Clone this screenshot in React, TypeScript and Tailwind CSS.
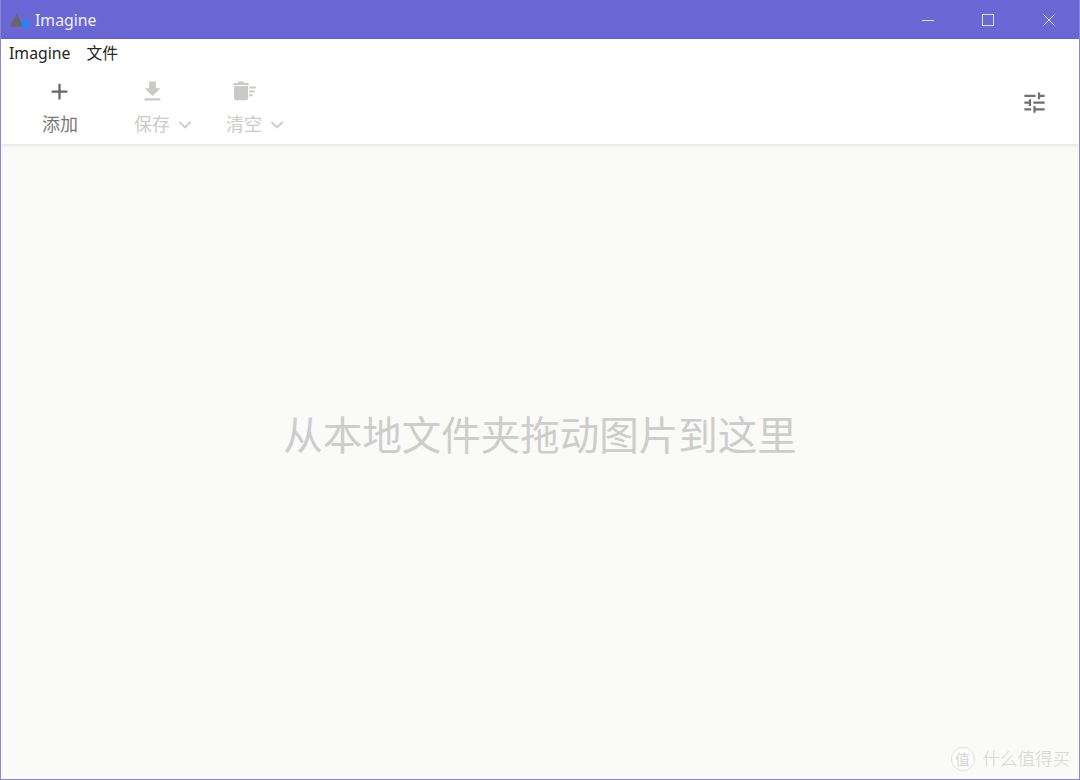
import React from "react";

const font = { fontFamily: '"Noto Sans", "Noto Sans CJK SC", sans-serif' };

function Chevron() {
  return (
    <svg width="14" height="14" viewBox="0 0 14 14" fill="none" stroke="currentColor" strokeWidth="1.9" className="ml-[8px] mt-[1px]">
      <path d="M1.5 4 7 9.5 12.5 4" />
    </svg>
  );
}

function ToolButton({ icon, label, chevron, disabled, className }: { icon: React.ReactNode; label: string; chevron?: boolean; disabled?: boolean; className: string }) {
  return (
    <div className={`flex flex-col items-center ${className} ${disabled ? "text-[#c9c9c7]" : "text-[#666666]"}`}>
      <div className="h-[24px] w-[24px]">{icon}</div>
      <div className={`mt-[8px] flex items-center text-[18px] leading-[26px] ${disabled ? "text-[#cbcbc9]" : "text-[#787878]"}`}>
        <span>{label}</span>
        {chevron && <Chevron />}
      </div>
    </div>
  );
}

export default function App() {
  return (
    <div className="relative flex h-[780px] w-[1080px] flex-col overflow-hidden border-x border-b border-x-[#8c86e2] border-b-[#8c86e2] bg-[#fafaf8]" style={font}>
      <div className="-mx-px flex h-[39px] shrink-0 items-center bg-[#6a67d5]">
        <svg width="24" height="16" viewBox="0 0 24 16" className="ml-[10px]">
          <path d="M6.5 1.5 13 14.5H0z" fill="#666666" />
          <path d="M20 14.5H11l4.5-8z" fill="#0a90ff" />
        </svg>
        <span className="ml-px pt-[2px] text-[15.8px] leading-none text-[#eeeefb]">Imagine</span>
        <div className="ml-auto flex h-full items-center text-[#dcdcf6]">
          <div className="flex w-[60px] justify-center">
            <svg width="12" height="12" viewBox="0 0 12 12" stroke="currentColor" fill="none" strokeWidth="1"><path d="M0 6.5h12" /></svg>
          </div>
          <div className="flex w-[60px] justify-center">
            <svg width="12" height="12" viewBox="0 0 12 12" stroke="currentColor" fill="none" strokeWidth="1"><rect x="0.5" y="0.5" width="11" height="11" /></svg>
          </div>
          <div className="flex w-[62px] justify-center">
            <svg width="12" height="12" viewBox="0 0 12 12" stroke="currentColor" fill="none" strokeWidth="1"><path d="M0.5 0.5l11 11M11.5 0.5l-11 11" /></svg>
          </div>
        </div>
      </div>

      <div className="z-10 shrink-0 bg-white shadow-[0_1px_4px_rgba(0,0,0,0.12)]">
        <div className="flex h-[28px] items-center gap-[16px] pl-[8px] pt-[2px] text-[15.8px] leading-none text-[#262626]">
          <span>Imagine</span>
          <span>文件</span>
        </div>
        <div className="flex h-[77px] items-start pt-[12px]">
          <ToolButton
            className="ml-[41px]"
            label="添加"
            icon={
              <svg viewBox="0 0 24 24" width="27" height="27" fill="currentColor" className="ml-[-2.5px] mt-[-1.5px] max-w-none">
                <path d="M19 13h-6v6h-2v-6H5v-2h6V5h2v6h6z" />
              </svg>
            }
          />
          <ToolButton
            className="ml-[56px]"
            label="保存"
            chevron
            disabled
            icon={
              <svg viewBox="0 0 24 24" width="27" height="27" fill="currentColor" className="ml-[-12.5px] mt-[-1.5px] max-w-none">
                <path d="M19 9h-4V3H9v6H5l7 7 7-7zM5 18v2h14v-2H5z" />
              </svg>
            }
          />
          <ToolButton
            className="ml-[34px]"
            label="清空"
            chevron
            disabled
            icon={
              <svg viewBox="0 0 24 24" width="27" height="27" fill="currentColor" className="ml-[-14.5px] mt-[-1.5px] max-w-none">
                <path d="M4 4.5h4.2V3h5V4.5h4.3v1.8H4z" />
                <path d="M4.5 7.2H17v11a1.5 1.5 0 0 1-1.5 1.5H6A1.5 1.5 0 0 1 4.5 18.2z" />
                <path d="M18 7.5h6v1.8h-6zM18 11h5v1.8h-5zM18 14.5h3v1.8h-3z" />
              </svg>
            }
          />
          <svg viewBox="0 0 24 24" width="27" height="27" fill="#707070" className="ml-auto mr-[31px] mt-[10px] max-w-none">
            <path d="M3 17v2h6v-2H3zM3 5v2h10V5H3zm10 16v-2h8v-2h-8v-2h-2v6h2zM7 9v2H3v2h4v2h2V9H7zm14 4v-2H11v2h10zm-6-4h2V7h4V5h-4V3h-2v6z" />
          </svg>
        </div>
      </div>

      <div className="flex flex-1 items-center justify-center pb-[54px]">
        <span className="text-[39.5px] leading-[56px] text-[#cdcdcb]">从本地文件夹拖动图片到这里</span>
      </div>

      <div className="absolute bottom-[8px] right-[9px] flex items-center text-[#d4d4d2]">
        <div className="flex h-[24px] w-[24px] items-center justify-center rounded-full border border-[#dddddb] bg-white text-[15px] leading-none">值</div>
        <span className="ml-[8px] text-[17.5px] font-light leading-none">什么值得买</span>
      </div>
    </div>
  );
}
